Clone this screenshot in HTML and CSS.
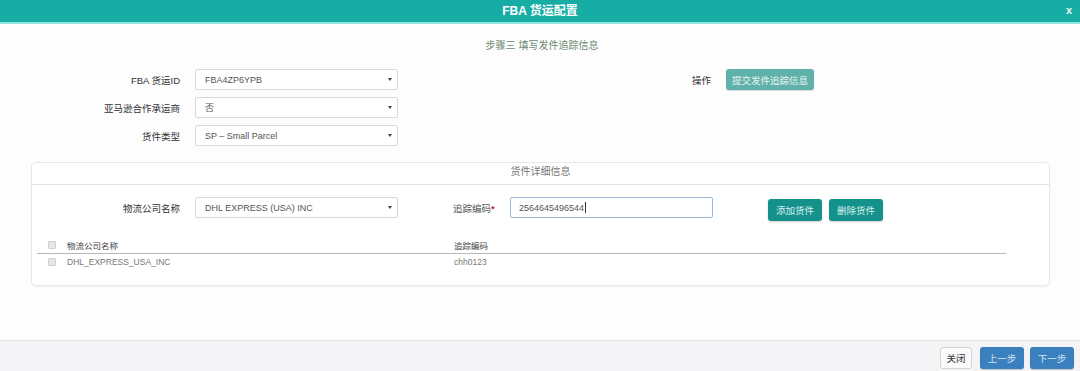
FILE: index.html
```html
<!DOCTYPE html>
<html lang="zh">
<head>
<meta charset="utf-8">
<title>FBA 货运配置</title>
<link rel="stylesheet" href="styles.css">
</head>
<body>
<div class="modal">
  <div class="modal-header">
    <span class="modal-title">FBA 货运配置</span>
    <span class="close">x</span>
  </div>
  <div class="modal-body">
    <div class="step-title">步骤三 填写发件追踪信息</div>
    <div class="top-form">
      <div class="top-fields">
        <div class="row">
          <label class="lbl">FBA 货运ID</label>
          <div class="select"><span>FBA4ZP6YPB</span><i class="caret"></i></div>
        </div>
        <div class="row">
          <label class="lbl">亚马逊合作承运商</label>
          <div class="select"><span>否</span><i class="caret"></i></div>
        </div>
        <div class="row">
          <label class="lbl">货件类型</label>
          <div class="select"><span>SP – Small Parcel</span><i class="caret"></i></div>
        </div>
      </div>
      <div class="ops">
        <span class="ops-label">操作</span>
        <button class="btn btn-light-teal">提交发件追踪信息</button>
      </div>
    </div>

    <div class="panel">
      <div class="panel-heading">货件详细信息</div>
      <div class="panel-row">
        <label class="lbl lbl-panel">物流公司名称</label>
        <div class="select"><span>DHL EXPRESS (USA) INC</span><i class="caret"></i></div>
        <label class="lbl-track">追踪编码<em>*</em></label>
        <div class="input"><span>2564645496544</span><i class="cursor"></i></div>
        <button class="btn btn-teal btn-add">添加货件</button>
        <button class="btn btn-teal">删除货件</button>
      </div>
      <div class="table">
        <div class="tr th">
          <span class="cb"></span>
          <span class="col1">物流公司名称</span>
          <span class="col2">追踪编码</span>
        </div>
        <div class="tr td">
          <span class="cb"></span>
          <span class="col1">DHL_EXPRESS_USA_INC</span>
          <span class="col2">chh0123</span>
        </div>
      </div>
    </div>
  </div>
  <div class="modal-footer">
    <button class="btn btn-default">关闭</button>
    <button class="btn btn-blue">上一步</button>
    <button class="btn btn-blue">下一步</button>
  </div>
</div>
</body>
</html>
```

FILE: styles.css
```css
* { box-sizing: border-box; }
html, body {
  margin: 0;
  padding: 0;
  background: #ffffff;
  font-family: "Liberation Sans", "Noto Sans CJK SC", sans-serif;
  color: #333;
}
.modal {
  width: 1080px;
  height: 371px;
  display: flex;
  flex-direction: column;
  background: #fdfdfd;
}
.modal-header {
  height: 24px;
  background: #17aca4;
  border-bottom: 2px solid #8fe6e1;
  display: flex;
  align-items: center;
  justify-content: center;
  position: relative;
}
.modal-title {
  color: #fff;
  font-weight: bold;
  font-size: 12px;
  line-height: 22px;
}
.close {
  position: absolute;
  right: 8px;
  top: 3px;
  color: #eaf8f7;
  font-weight: bold;
  font-size: 11px;
  line-height: 14px;
}
.modal-body {
  flex: 1;
  padding-top: 15px;
}
.step-title {
  text-align: center;
  font-size: 10px;
  line-height: 14px;
  color: #6a8a70;
  padding-left: 4px;
}
.top-form {
  display: flex;
  margin-top: 16px;
}
.top-fields {
  display: flex;
  flex-direction: column;
  gap: 7px;
}
.row {
  display: flex;
  align-items: center;
}
.lbl {
  width: 180px;
  text-align: right;
  font-size: 9.5px;
  color: #333;
  margin-right: 15px;
}
.select {
  width: 203px;
  height: 21px;
  border: 1px solid #d8d8d8;
  border-radius: 2px;
  background: #fff;
  display: flex;
  align-items: center;
  justify-content: space-between;
  padding: 0 5px 0 9px;
  font-size: 9px;
  color: #555;
}
.caret {
  width: 0;
  height: 0;
  border-left: 2px solid transparent;
  border-right: 2px solid transparent;
  border-top: 3px solid #444;
}
.ops {
  display: flex;
  align-items: center;
  margin-left: 294px;
  height: 21px;
}
.ops-label {
  font-size: 9.5px;
  color: #333;
  margin-right: 15px;
}
.btn {
  border: none;
  font-family: inherit;
  font-size: 9.5px;
  border-radius: 3px;
  padding: 0;
  cursor: pointer;
}
.btn-light-teal {
  width: 88px;
  height: 21px;
  background: #5fb1a9;
  color: #eaf6f4;
  box-shadow: 0 1px 1px rgba(0,0,0,0.15);
}
.panel {
  margin: 16px 30px 0 31px;
  height: 124px;
  border: 1px solid #e8e8e8;
  border-radius: 5px;
  background: #fff;
  box-shadow: 0 1px 2px rgba(0,0,0,0.06);
}
.panel-heading {
  height: 22px;
  border-bottom: 1px solid #e2e2e2;
  text-align: center;
  font-size: 10px;
  line-height: 18px;
  color: #777;
}
.panel-row {
  display: flex;
  align-items: center;
  margin-top: 9px;
}
.lbl-panel {
  width: 148px;
}
.lbl-track {
  margin-left: 55px;
  width: 57px;
  font-size: 9.5px;
  color: #555;
}
.lbl-track em {
  font-style: normal;
  color: #c9302c;
  font-weight: bold;
}
.input {
  width: 203px;
  height: 21px;
  border: 1px solid #9bb7d3;
  border-radius: 2px;
  background: #fff;
  display: flex;
  align-items: center;
  padding-left: 8px;
  font-size: 9px;
  color: #555;
}
.cursor {
  width: 1px;
  height: 11px;
  background: #333;
  margin-left: 1px;
}
.btn-teal {
  width: 54px;
  height: 22px;
  background: #15918b;
  color: #d8f0ee;
  box-shadow: 0 1px 2px rgba(0,0,0,0.2);
  margin-top: 5px;
}
.btn-add {
  margin-left: 55px;
  margin-right: 7px;
}
.table {
  margin: 16px 43px 0 5px;
}
.tr {
  display: flex;
  align-items: center;
  font-size: 8.5px;
  height: 16px;
}
.th {
  color: #444;
  border-bottom: 1px solid #b8b8b8;
  height: 17px;
}
.td {
  color: #777;
}
.cb {
  width: 8px;
  height: 8px;
  border: 1px solid #cfcfcf;
  background: #e6e6e6;
  border-radius: 1px;
  margin-left: 11px;
}
.col1 {
  margin-left: 11px;
  width: 387px;
}
.modal-footer {
  height: 31px;
  background: #f4f4f6;
  border-top: 1px solid #e2e2e4;
  display: flex;
  justify-content: flex-end;
  align-items: center;
  gap: 6px;
  padding-right: 6px;
  padding-top: 4px;
}
.btn-default {
  width: 32px;
  height: 22px;
  background: #fafafa;
  border: 1px solid #d4d4d4;
  color: #333;
  margin-right: 2px;
}
.btn-blue {
  width: 44px;
  height: 22px;
  background: #3a7fbe;
  color: #d5e4f2;
  box-shadow: 0 1px 1px rgba(0,0,0,0.2);
}
```
